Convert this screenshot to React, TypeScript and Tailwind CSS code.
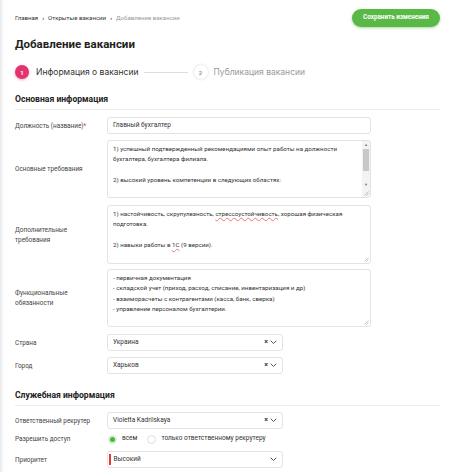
import React from 'react'

const Chevron = () => (
    <svg width="7" height="5" viewBox="0 0 7 5" fill="none">
        <path d="M1 1l2.5 2.5L6 1" stroke="#555" strokeWidth="1" strokeLinecap="round" strokeLinejoin="round" />
    </svg>
)

const Grip = () => (
    <svg className="absolute right-[1px] bottom-[1px]" width="6" height="6" viewBox="0 0 6 6">
        <path d="M5.5 1.5L1.5 5.5M5.5 3.5L3.5 5.5" stroke="#aaa" strokeWidth="0.7" />
    </svg>
)

function Row({ label, children, req }: { label: React.ReactNode; children: React.ReactNode; req?: boolean }) {
    return (
        <div className="flex items-center">
            <div className="w-[92px] shrink-0 text-[6.4px] leading-[10px] text-[#444] pr-2">
                {label}
                {req && <span className="text-[#e53935]">*</span>}
            </div>
            {children}
        </div>
    )
}

function Select({ value, clear = true, bar }: { value: string; clear?: boolean; bar?: boolean }) {
    return (
        <div className="w-[176px] h-[17px] border border-[#e3e3e3] rounded-[3px] flex items-center pl-[5px] pr-[5px] bg-white">
            {bar && <span className="w-[1.5px] h-[11px] bg-[#e53935] -ml-[4px] mr-[3px]" />}
            <span className="flex-1 text-[6.5px] text-[#333]">{value}</span>
            {clear && <span className="text-[7px] font-bold text-[#333] mr-[2px] leading-none">×</span>}
            <Chevron />
        </div>
    )
}

function Area({ lines, h, scroll }: { lines: React.ReactNode[]; h: string; scroll?: boolean }) {
    return (
        <div className={`relative w-[264px] ${h} border border-[#e3e3e3] rounded-[3px] bg-white overflow-hidden pl-[5px] pr-[12px] pt-[3px]`}>
            {lines.map((l, i) => (
                <div key={i} className="text-[6.2px] leading-[10.4px] text-[#333] whitespace-nowrap h-[10.4px]">{l}</div>
            ))}
            {scroll && (
                <div className="absolute right-0 top-0 bottom-0 w-[8px] bg-[#f3f3f3] flex flex-col items-center">
                    <span className="text-[4px] text-[#777] mt-[2px] leading-none">▲</span>
                    <span className="w-[6px] h-[22px] bg-[#c8c8c8] mt-[2px]" />
                    <span className="text-[4px] text-[#777] mt-auto mb-[10px] leading-none">▼</span>
                </div>
            )}
            <Grip />
        </div>
    )
}

const Wavy = ({ children }: { children: React.ReactNode }) => (
    <span className="underline decoration-wavy decoration-[#e8777a] decoration-[0.5px] underline-offset-[1px]">{children}</span>
)

export default function App() {
    return (
        <div className="w-[450px] h-[472px] overflow-hidden bg-white flex font-['Roboto',sans-serif]">
            <div className="w-[4px] shrink-0 bg-gradient-to-r from-[#e9e9ec] to-white" />
            <div className="flex-1 pl-[11px] pr-[10px]">
                <div className="flex items-center justify-between pt-[9px] h-[27px]">
                    <div className="flex items-center gap-[4px] text-[6.1px] text-[#333]">
                        <span>Главная</span>
                        <span className="font-bold">›</span>
                        <span>Открытые вакансии</span>
                        <span className="font-bold">›</span>
                        <span className="text-[#999]">Добавление вакансии</span>
                    </div>
                    <button className="w-[88px] h-[18px] rounded-full bg-[#5ab846] text-white text-[6.3px] font-bold shadow-[0_1px_3px_rgba(90,184,70,0.5)]">
                        Сохранить изменения
                    </button>
                </div>

                <h1 className="mt-[9px] text-[11.5px] leading-[16px] font-bold text-[#222]">
                    Добавление вакансии
                </h1>

                <div className="mt-[13px] flex items-center h-[14px]">
                    <span className="w-[14px] h-[14px] rounded-full bg-[#e2336f] text-white text-[6px] font-bold flex items-center justify-center shadow-[0_1px_3px_rgba(226,51,111,0.4)]">1</span>
                    <span className="ml-[7px] text-[8.5px] text-[#333] font-['Inter',sans-serif]">Информация о вакансии</span>
                    <span className="ml-[5px] w-[44px] h-px bg-[#ddd]" />
                    <span className="ml-[6px] w-[14px] h-[14px] rounded-full bg-white text-[#999] text-[6px] font-bold flex items-center justify-center shadow-[0_0_3px_rgba(0,0,0,0.18)]">2</span>
                    <span className="ml-[6px] text-[8.5px] text-[#999] font-['Inter',sans-serif]">Публикация вакансии</span>
                </div>

                <div className="mt-[14px] pb-[4px] border-b border-[#ececec] text-[8.6px] leading-[12px] font-bold text-[#222]">
                    Основная информация
                </div>

                <div className="flex flex-col">
                    <div className="mt-[7px]">
                        <Row label="Должность (название)" req>
                            <div className="w-[264px] h-[17px] border border-[#e3e3e3] rounded-[3px] flex items-center pl-[5px] text-[6.5px] text-[#333]">Главный бухгалтер</div>
                        </Row>
                    </div>
                    <div className="mt-[6px]">
                        <Row label="Основные требования">
                            <Area
                                h="h-[58px]"
                                scroll
                                lines={[
                                    '1) успешный подтвержденный рекомендациями опыт работы на должности',
                                    'бухгалтера, бухгалтера филиала.',
                                    '',
                                    '2) высокий уровень компетенции в следующих областях:',
                                    '',
                                    '- первичная документация',
                                ]}
                            />
                        </Row>
                    </div>
                    <div className="mt-[7px]">
                        <Row label={<>Дополнительные<br />требования</>}>
                            <Area
                                h="h-[59px]"
                                lines={[
                                    <>1) настойчивость, скрупулезность, <Wavy>стрессоустойчивость</Wavy>, хорошая физическая</>,
                                    'подготовка.',
                                    '',
                                    <>2) навыки работы в <Wavy>1С</Wavy> (9 версии).</>,
                                ]}
                            />
                        </Row>
                    </div>
                    <div className="mt-[5px]">
                        <Row label={<>Функциональные<br />обязанности</>}>
                            <Area
                                h="h-[58px]"
                                lines={[
                                    '- первичная документация',
                                    '- складской учет (приход, расход, списание, инвентаризация и др)',
                                    '- взаиморасчеты с контрагентами (касса, банк, сверка)',
                                    '- управление персоналом бухгалтерии.',
                                ]}
                            />
                        </Row>
                    </div>
                    <div className="mt-[7px]">
                        <Row label="Страна">
                            <Select value="Украина" />
                        </Row>
                    </div>
                    <div className="mt-[6px]">
                        <Row label="Город">
                            <Select value="Харьков" />
                        </Row>
                    </div>
                </div>

                <div className="mt-[15px] pb-[4px] border-b border-[#ececec] text-[8.6px] leading-[12px] font-bold text-[#222]">
                    Служебная информация
                </div>

                <div className="mt-[6px]">
                    <Row label="Ответственный рекрутер">
                        <Select value="Violetta Kadrilskaya" />
                    </Row>
                </div>
                <div className="mt-[5px]">
                    <Row label="Разрешить доступ">
                        <div className="flex items-center h-[10px] text-[6.5px] text-[#333]">
                            <span className="w-[9px] h-[9px] rounded-full bg-[#d9f0d3] flex items-center justify-center ml-[1px]">
                                <span className="w-[5px] h-[5px] rounded-full bg-[#4cb63c]" />
                            </span>
                            <span className="ml-[5px]">всем</span>
                            <span className="ml-[10px] w-[9px] h-[9px] rounded-full border border-[#ddd] bg-white" />
                            <span className="ml-[5px]">только ответственному рекрутеру</span>
                        </div>
                    </Row>
                </div>
                <div className="mt-[7px]">
                    <Row label="Приоритет">
                        <Select value="Высокий" clear={false} bar />
                    </Row>
                </div>
            </div>
        </div>
    )
}
